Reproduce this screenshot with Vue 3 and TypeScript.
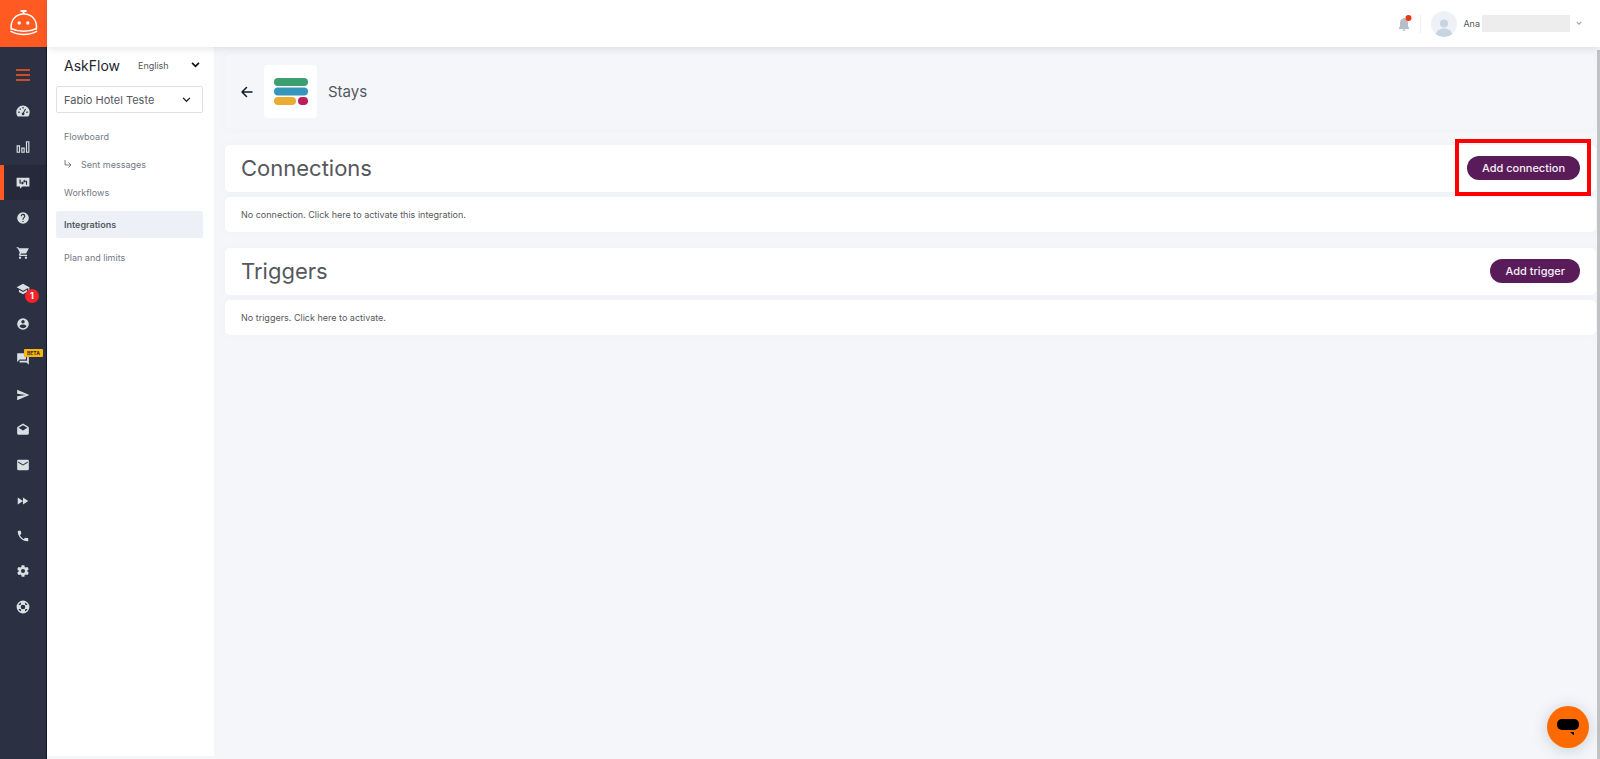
<script setup lang="ts">
import { ref } from 'vue'

interface RailItem {
  name: string
  path: string
  active?: boolean
  count?: number
  tag?: string
}

interface Section {
  title: string
  action: string
  empty: string
  highlighted: boolean
}

const railItems: RailItem[] = [
  { name: 'Dashboard', path: 'M12 2.500A11.500 11.500 0 0 0 .5 14c0 2.800 1 5.300 2.600 7.500h17.800A12 12 0 0 0 23.500 14 11.500 11.500 0 0 0 12 2.500zM4 13h2.300v2.300H4zM6.300 7.500h2.200v2.200H6.300zM11 5.300h2.200v2.200H11zM17.700 13H20v2.300h-2.300zM15.500 8l1.600 1-3.300 6.200a2.300 2.300 0 1 1-1.700-.7z' },
  { name: 'Statistics', path: 'M1 9h6v13H1zM3 11v9h2v-9zM9 13h6v9H9zM11 15v5h2v-5zM17 2h6v20h-6zM19 4v16h2V4z' },
  { name: 'AskFlow', path: 'M1 3h22v15H11l-4 4v-4H1zM6 6v7h4v2l4-3-4-3v2H8V6zM19 15V8h-4V6l-3 2.500 3 3V10h2v5z', active: true },
  { name: 'Help', path: 'M12 2a10 10 0 1 0 0 20 10 10 0 0 0 0-20zm1 17h-2v-2h2zm2.070-7.750-.9.920C13.450 12.900 13 13.500 13 15h-2v-.5c0-1.100.45-2.100 1.170-2.830l1.240-1.260A2 2 0 1 0 10 9H8a4 4 0 1 1 7.070 2.250z' },
  { name: 'Store', path: 'M7 18a2 2 0 1 0 0 4 2 2 0 0 0 0-4zM1 2v2h2l3.600 7.590-1.350 2.450A2 2 0 0 0 7 17h12v-2H7.420l1.130-2h7.450c.75 0 1.410-.41 1.750-1.030L22 4H5.210l-.94-2zm16 16a2 2 0 1 0 0 4 2 2 0 0 0 0-4z' },
  { name: 'Academy', path: 'M5 13.180v4L12 21l7-3.820v-4L12 17zM12 3 1 9l11 6 9-4.910V17h2V9z', count: 1 },
  { name: 'Account', path: 'M12 2a10 10 0 1 0 0 20 10 10 0 0 0 0-20zm0 3a3 3 0 1 1 0 6 3 3 0 0 1 0-6zm0 14.200a7.200 7.200 0 0 1-6-3.220c.03-1.990 4-3.080 6-3.080s5.970 1.090 6 3.080a7.200 7.200 0 0 1-6 3.220z' },
  { name: 'Conversations', path: 'M21 6h-2v9H6v2c0 .55.45 1 1 1h11l4 4V7c0-.55-.45-1-1-1zm-4 6V3c0-.55-.45-1-1-1H3c-.55 0-1 .45-1 1v14l4-4h10c.55 0 1-.45 1-1z', tag: 'BETA' },
  { name: 'Send', path: 'M2 21 23 12 2 3v7l15 2-15 2z' },
  { name: 'Drafts', path: 'M22 8c0-.72-.37-1.350-.94-1.700L12 1 2.950 6.300C2.380 6.650 2 7.280 2 8v10c0 1.100.9 2 2 2h16a2 2 0 0 0 2-2zM12 13 4.500 8 12 4l7.500 4z' },
  { name: 'Mail', path: 'M20 3H4a2 2 0 0 0-2 2v14c0 1.100.9 2 2 2h16a2 2 0 0 0 2-2V5a2 2 0 0 0-2-2zm0 5-8 5-8-5V6l8 5 8-5z' },
  { name: 'Campaigns', path: 'M3 18l9-6-9-6zM12 6v12l9-6z' },
  { name: 'Phone', path: 'M6.620 10.790a15.150 15.150 0 0 0 6.590 6.590l2.200-2.200c.27-.27.67-.36 1.020-.24 1.120.37 2.330.57 3.570.57.55 0 1 .45 1 1V20c0 .55-.45 1-1 1C10.610 21 3 13.390 3 4c0-.55.45-1 1-1h3.500c.55 0 1 .45 1 1 0 1.250.2 2.450.57 3.570.11.35.03.74-.25 1.020z' },
  { name: 'Settings', path: 'M19.430 12.980a8 8 0 0 0 0-1.960l2.110-1.650c.19-.15.24-.42.12-.64l-2-3.460c-.12-.22-.39-.3-.61-.22l-2.490 1a7.300 7.300 0 0 0-1.690-.98l-.38-2.650A.49.49 0 0 0 14 2h-4c-.25 0-.46.18-.49.420l-.38 2.650c-.61.25-1.170.59-1.690.98l-2.490-1c-.23-.09-.49 0-.61.22l-2 3.460c-.13.22-.07.49.12.64l2.110 1.650a8 8 0 0 0 0 1.960l-2.110 1.650c-.19.15-.24.42-.12.64l2 3.460c.12.22.39.3.61.22l2.490-1c.52.4 1.080.73 1.690.98l.38 2.650c.03.24.24.42.49.42h4c.25 0 .46-.18.49-.42l.38-2.650c.61-.25 1.170-.59 1.690-.98l2.490 1c.23.09.49 0 .61-.22l2-3.460c.12-.22.07-.49-.12-.64zM12 15.500a3.500 3.500 0 1 1 0-7 3.500 3.500 0 0 1 0 7z' },
  { name: 'Support', path: 'M12 1a11 11 0 1 0 0 22 11 11 0 0 0 0-22zM8.500 4.200v3.200a6 6 0 0 0-1.100 1.100H4.200a8.600 8.600 0 0 1 4.300-4.300zM15.500 4.200a8.600 8.600 0 0 1 4.300 4.300h-3.200a6 6 0 0 0-1.100-1.100zM12 8a4 4 0 1 1 0 8 4 4 0 0 1 0-8zM4.200 15.500h3.200a6 6 0 0 0 1.100 1.100v3.200a8.600 8.600 0 0 1-4.300-4.300zM16.600 15.500h3.200a8.600 8.600 0 0 1-4.300 4.300v-3.200a6 6 0 0 0 1.100-1.100z' },
]

const sections: Section[] = [
  { title: 'Connections', action: 'Add connection', empty: 'No connection. Click here to activate this integration.', highlighted: true },
  { title: 'Triggers', action: 'Add trigger', empty: 'No triggers. Click here to activate.', highlighted: false },
]

const menu = [
  { label: 'Flowboard' },
  { label: 'Sent messages', nested: true },
  { label: 'Workflows' },
  { label: 'Integrations', active: true },
  { label: 'Plan and limits' },
]

const language = ref('English')
const hotel = ref('Fabio Hotel Teste')
</script>

<template>
  <div class="app">
    <nav class="rail" aria-label="Main">
      <a class="brand" href="#" aria-label="Home">
        <svg viewBox="0 0 30 28" width="30" height="28" fill="none" stroke="#fff" stroke-width="1.500">
          <path d="M11.500 2h6M14.500 2v3" stroke-width="2" />
          <path d="M2.200 20.500C1 11.500 6.500 5 14.800 5s13.800 6.500 12.600 15.500" />
          <path d="M2 19.500c7.500 3.800 18 3.800 25.600 0M1.500 22.200c7.800 4.400 18.800 4.400 26.600 0" />
          <circle cx="10.200" cy="14" r="1.700" fill="#fff" stroke="none" />
          <circle cx="18.800" cy="14" r="1.700" fill="#fff" stroke="none" />
        </svg>
      </a>
      <button class="rail-item burger" type="button" aria-label="Toggle menu">
        <svg viewBox="0 0 14 12" width="14" height="12" stroke="#ff5a22" stroke-width="1.500">
          <path d="M0 1h14M0 6h14M0 11h14" />
        </svg>
      </button>
      <a
        v-for="item in railItems"
        :key="item.name"
        class="rail-item"
        :class="{ active: item.active }"
        href="#"
        :aria-label="item.name"
      >
        <span class="rail-icon">
          <svg viewBox="0 0 24 24" width="14" height="14"><path :d="item.path" fill="#d7e0e2" fill-rule="evenodd" /></svg>
          <span v-if="item.count" class="count">{{ item.count }}</span>
          <span v-if="item.tag" class="tag">{{ item.tag }}</span>
        </span>
      </a>
    </nav>

    <div class="workspace">
      <header class="topbar">
        <button class="bell" type="button" aria-label="Notifications">
          <svg viewBox="0 0 14 18" width="14" height="18">
            <path d="M5 3.800V3h2v.8c2.200.5 3 2.200 3 4.200v3l1 2v1H1v-1l1-2V8c0-2 .8-3.700 3-4.200zM4.500 14.500h3a1.500 1.500 0 0 1-3 0z" fill="#b9bccb" />
            <circle cx="10.500" cy="3" r="3" fill="#e8380d" />
          </svg>
        </button>
        <button class="account" type="button">
          <svg viewBox="0 0 26 26" width="26" height="26">
            <circle cx="13" cy="13" r="13" fill="#eef2f6" />
            <circle cx="13" cy="12.500" r="4" fill="#c9d4e3" />
            <path d="M5 23.200c.4-3.400 3.500-5.700 8-5.700s7.600 2.300 8 5.700a13 13 0 0 1-16 0z" fill="#c9d4e3" />
          </svg>
          <span>Ana</span>
          <span class="surname" aria-hidden="true"></span>
          <svg viewBox="0 0 8 6" width="6" height="5" fill="none" stroke="#a5a9b8" stroke-width="1.500"><path d="M1 1l3 3 3-3" /></svg>
        </button>
      </header>

      <div class="body">
        <aside class="panel">
          <div class="panel-head">
            <h1>AskFlow</h1>
            <div class="field language">
              <select v-model="language" aria-label="Language"><option>English</option></select>
              <svg viewBox="0 0 10 7" width="9" height="6" fill="none" stroke="#111" stroke-width="2"><path d="M1 1l4 4 4-4" /></svg>
            </div>
          </div>
          <div class="field hotel">
            <select v-model="hotel" aria-label="Hotel"><option>Fabio Hotel Teste</option></select>
            <svg viewBox="0 0 10 7" width="9" height="6" fill="none" stroke="#222" stroke-width="1.500"><path d="M1 1l4 4 4-4" /></svg>
          </div>
          <nav class="menu" aria-label="AskFlow">
            <a v-for="entry in menu" :key="entry.label" href="#" :class="{ active: entry.active }">
              <svg v-if="entry.nested" viewBox="0 0 8 9" width="8" height="9" fill="none" stroke="#77828e"><path d="M1 0v5h6M4.500 2.500 7 5 4.500 7.500" /></svg>
              {{ entry.label }}
            </a>
          </nav>
        </aside>

        <main class="content">
          <div class="card integration">
            <a href="#" class="back" aria-label="Back">
              <svg viewBox="0 0 12 12" width="12" height="12" fill="none" stroke="#111c24" stroke-width="1.500" stroke-linecap="round" stroke-linejoin="round"><path d="M11 6H1M5.500 1.500 1 6l4.500 4.500" /></svg>
            </a>
            <span class="logo">
              <svg viewBox="0 0 34 27" width="34" height="27">
                <rect width="34" height="8" rx="4" fill="#3c9f70" />
                <rect y="9.500" width="34" height="8" rx="4" fill="#3596b9" />
                <rect y="19" width="22" height="8" rx="4" fill="#e9ae31" />
                <rect x="24" y="19" width="10" height="8" rx="4" fill="#be1e5b" />
              </svg>
            </span>
            <span class="integration-name">Stays</span>
          </div>

          <section v-for="section in sections" :key="section.title" class="section">
            <div class="card section-head">
              <h2>{{ section.title }}</h2>
              <div class="action" :class="{ highlighted: section.highlighted }">
                <button type="button">{{ section.action }}</button>
              </div>
            </div>
            <p class="card empty">{{ section.empty }}</p>
          </section>
        </main>
      </div>
    </div>

    <div class="scrollbar" aria-hidden="true"></div>
    <button class="chat" type="button" aria-label="Open chat">
      <svg viewBox="0 0 22 16" width="22" height="16"><rect width="22" height="11" rx="5" /><path d="M13 13h4v3.500z" /></svg>
    </button>
  </div>
</template>

<style>
body {
  margin: 0;
}
</style>

<style scoped>
.app {
  position: relative;
  display: flex;
  min-height: 100vh;
  background: #f4f6fa;
  color: #55585c;
  font-family: Inter, "Liberation Sans", sans-serif;
  font-size: 9px;
}

.app *,
.app {
  box-sizing: border-box;
}

button,
select {
  border: 0;
  padding: 0;
  background: none;
  color: inherit;
  font: inherit;
}

svg {
  display: block;
  flex: none;
}

a {
  color: inherit;
  text-decoration: none;
}

.rail {
  display: flex;
  flex-direction: column;
  flex: none;
  width: 47px;
  background: #2b3042;
  border-right: 1px solid #11172c;
}

.brand {
  display: flex;
  align-items: center;
  justify-content: center;
  height: 47px;
  margin-right: -1px;
  padding-bottom: 2px;
  background: #ff5a22;
}

.rail-item {
  display: flex;
  align-items: center;
  justify-content: center;
  height: 35px;
}

.burger {
  height: 36px;
  margin-top: 10px;
}

.rail-item:nth-child(3n + 1),
.burger + .rail-item {
  height: 36px;
}

.rail-item.active {
  background: #25293a;
  box-shadow: inset 4px 0 #ff5a22;
}

.rail-icon {
  position: relative;
}

.count {
  position: absolute;
  top: 7px;
  left: 9px;
  width: 14px;
  height: 14px;
  border-radius: 50%;
  background: #f5242c;
  color: #fff;
  font-weight: 700;
  line-height: 14px;
  text-align: center;
}

.tag {
  position: absolute;
  top: -3px;
  left: 8px;
  width: 19px;
  height: 8px;
  border-radius: 1px;
  background: #fbb50b;
  color: #2b2a28;
  font-size: 5px;
  font-weight: 700;
  line-height: 8px;
  text-align: center;
}

.workspace {
  display: flex;
  flex: 1;
  flex-direction: column;
  min-width: 0;
}

.topbar {
  position: relative;
  z-index: 1;
  display: flex;
  align-items: center;
  justify-content: flex-end;
  height: 47px;
  padding-right: 18px;
  background: #fff;
  box-shadow: 0 1px 8px rgba(40, 50, 70, 0.14);
}

.bell {
  padding-right: 8px;
  border-right: 1px solid #eceef2;
}

.account {
  display: flex;
  align-items: center;
  gap: 6px;
  margin-left: 10px;
}

.surname {
  width: 88px;
  height: 17px;
  margin-left: -4px;
  background: #ededee;
}

.body {
  display: flex;
  flex: 1;
}

.panel {
  flex: none;
  width: 167px;
  margin-bottom: 3px;
  padding: 8px 11px 0 9px;
  background: #fff;
}

.panel-head {
  display: flex;
  align-items: center;
  justify-content: space-between;
  height: 20px;
  padding: 0 3px 0 8px;
}

h1 {
  margin: 0;
  color: #22272d;
  font-size: 14px;
  font-weight: 400;
}

.field {
  position: relative;
  display: flex;
  align-items: center;
}

.field select {
  width: 100%;
  appearance: none;
  outline: 0;
}

.field svg {
  position: absolute;
  right: 0;
  pointer-events: none;
}

.language {
  width: 62px;
}

.hotel {
  height: 27px;
  margin: 11px 0 9px;
  border: 1px solid #dde1e6;
  border-radius: 2px;
  font-size: 11px;
}

.hotel select {
  height: 100%;
  padding-left: 7px;
}

.hotel svg {
  right: 11px;
}

.menu {
  display: flex;
  flex-direction: column;
  color: #727a84;
}

.menu a {
  display: flex;
  align-items: center;
  gap: 9px;
  height: 28px;
  padding-left: 8px;
}

.menu a.active {
  margin: 5px 0;
  height: 27px;
  border-radius: 2px;
  background: #edf1f7;
  color: #515a65;
  font-weight: 600;
}

.content {
  flex: 1;
  min-width: 0;
  padding: 7px 4px 16px 11px;
}

.card {
  border-radius: 5px;
  background: #fff;
  box-shadow: 0 0 10px rgba(60, 80, 120, 0.03);
}

.integration {
  display: flex;
  align-items: center;
  height: 75px;
  padding: 0 15px 0 16px;
  background: transparent;
}

.logo {
  display: flex;
  align-items: center;
  justify-content: center;
  width: 53px;
  height: 53px;
  margin: 0 11px;
  border-radius: 4px;
  background: #fff;
}

.integration-name {
  font-size: 15px;
}

.section {
  margin-top: 16px;
}

.section-head {
  display: flex;
  align-items: center;
  justify-content: space-between;
  height: 47px;
  padding: 0 16px 2px;
}

h2 {
  margin: 0;
  font-size: 22px;
  font-weight: 400;
}

.action {
  position: relative;
}

.action button {
  display: block;
  height: 24px;
  padding: 0 15px;
  border-radius: 12px;
  background: #5a1c59;
  color: #f6eff6;
  font-size: 11px;
  font-weight: 500;
}

.highlighted::after {
  content: "";
  position: absolute;
  inset: -17px -11px -16px -12px;
  border: 4px solid #fe0000;
  pointer-events: none;
}

.empty {
  height: 35px;
  margin: 5px 0 0;
  padding: 0 16px;
  line-height: 35px;
}

.scrollbar {
  position: absolute;
  top: 50px;
  right: 0;
  bottom: 0;
  width: 3px;
  background: #c1c2c4;
}

.chat {
  position: fixed;
  right: 11px;
  bottom: 11px;
  display: flex;
  align-items: center;
  justify-content: center;
  width: 42px;
  height: 42px;
  border-radius: 50%;
  background: #ff6a00;
  box-shadow: 0 2px 16px rgba(20, 60, 60, 0.2);
}
</style>
